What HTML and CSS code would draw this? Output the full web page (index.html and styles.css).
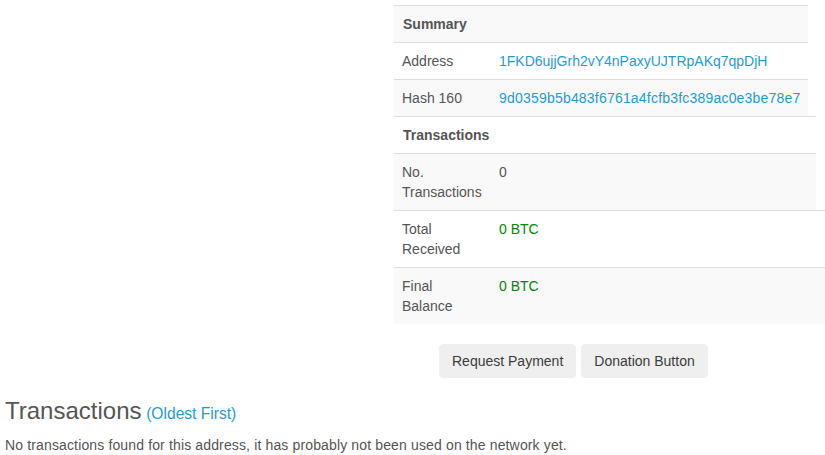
FILE: index.html
```html
<!DOCTYPE html>
<html>
<head>
<meta charset="utf-8">
<link rel="stylesheet" href="styles.css">
</head>
<body>
<div class="top">
  <div class="left"></div>
  <div class="right">
    <div class="table t1">
      <div class="row stripe"><div class="cell head">Summary</div></div>
      <div class="row"><div class="cell label">Address</div><div class="cell"><a class="link" href="#">1FKD6ujjGrh2vY4nPaxyUJTRpAKq7qpDjH</a></div></div>
      <div class="row stripe"><div class="cell label">Hash 160</div><div class="cell"><a class="link hash" href="#">9d0359b5b483f6761a4fcfb3fc389ac0e3be78e7</a></div></div>
    </div>
    <div class="table t2">
      <div class="row narrow"><div class="cell head">Transactions</div></div>
      <div class="row narrow stripe"><div class="cell label">No. Transactions</div><div class="cell">0</div></div>
      <div class="row wide"><div class="cell label">Total Received</div><div class="cell green">0 BTC</div></div>
      <div class="row wide stripe"><div class="cell label">Final Balance</div><div class="cell green">0 BTC</div></div>
    </div>
    <div class="buttons">
      <button class="btn">Request Payment</button>
      <button class="btn">Donation Button</button>
    </div>
  </div>
</div>
<h2 class="title">Transactions <a class="small link" href="#">(Oldest First)</a></h2>
<p class="note">No transactions found for this address, it has probably not been used on the network yet.</p>
</body>
</html>
```
FILE: styles.css
```css
html, body {
  margin: 0;
  padding: 0;
  overflow: hidden;
}
body {
  font-family: "Liberation Sans", Arial, sans-serif;
  font-size: 14px;
  line-height: 20px;
  color: #555;
  background: #fff;
}
.top {
  display: grid;
  grid-template-columns: 394px 1fr;
  padding-top: 5px;
}
.right {
  display: flex;
  flex-direction: column;
}
.table {
  display: flex;
  flex-direction: column;
}
.t1 { width: 414px; }
.row {
  display: grid;
  grid-template-columns: 97px 1fr;
  border-top: 1px solid #ddd;
}
.t2 .narrow { width: 422px; }
.t2 .wide { width: 431px; }
.stripe { background: #f9f9f9; }
.cell {
  padding: 8px;
}
.head {
  grid-column: 1 / 3;
  font-weight: bold;
  color: #555;
  padding-left: 9px;
}
.label { color: #555; }
.link {
  color: #1f9bd6;
  text-decoration: none;
}
.hash { letter-spacing: 0.2px; }
.green { color: #080; }
.buttons {
  display: flex;
  gap: 5px;
  margin-top: 20px;
  padding-left: 45px;
}
.btn {
  font-family: "Liberation Sans", Arial, sans-serif;
  font-size: 14px;
  line-height: 20px;
  color: #3c3c3c;
  background: #efefef;
  border: 1px solid #efefef;
  border-radius: 4px;
  padding: 6px 12px;
}
.title {
  margin: 20px 0 0 5px;
  font-size: 24px;
  line-height: 26px;
  font-weight: normal;
  color: #555;
}
.small {
  font-size: 15.6px;
  margin-left: -2px;
}
.note {
  margin: 8px 0 0 5px;
  font-size: 14px;
  line-height: 20px;
  letter-spacing: 0.14px;
  color: #555;
}
```
